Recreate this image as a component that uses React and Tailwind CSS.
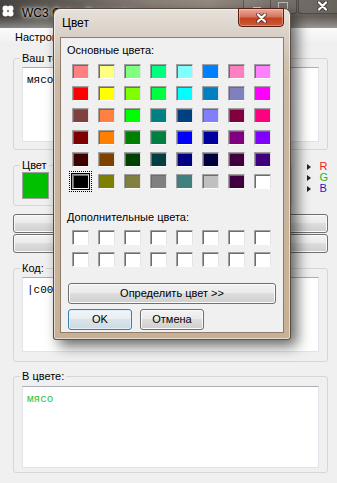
import React from 'react'

const basicColors = [
    ['#ff8080', '#ffff80', '#80ff80', '#00ff80', '#80ffff', '#0080ff', '#ff80c0', '#ff80ff'],
    ['#ff0000', '#ffff00', '#80ff00', '#00ff40', '#00ffff', '#0080c0', '#8080c0', '#ff00ff'],
    ['#804040', '#ff8040', '#00ff00', '#008080', '#004080', '#8080ff', '#800040', '#ff0080'],
    ['#800000', '#ff8000', '#008000', '#008040', '#0000ff', '#0000a0', '#800080', '#8000ff'],
    ['#400000', '#804000', '#004000', '#004040', '#000080', '#000040', '#400040', '#400080'],
    ['#000000', '#808000', '#808040', '#808080', '#408080', '#c0c0c0', '#400040', '#ffffff'],
]

const btn =
    'rounded-[3px] border border-[#707070] bg-[linear-gradient(180deg,#f2f2f2_0%,#ebebeb_45%,#dddddd_50%,#cfcfcf_100%)] shadow-[inset_0_0_0_1px_#fbfbfb]'

function Swatch({ color, selected }) {
    return (
        <div
            className={
                'h-[15px] w-[17px] border border-[#a0a0a0] border-b-white border-r-[#e3e3e3] shadow-[inset_1px_1px_0_#6d6d6d]' +
                (selected ? ' outline outline-dotted outline-black outline-offset-[2px] ring-1 ring-black' : '')
            }
            style={{ backgroundColor: color }}
        />
    )
}

function Group({ label, className, children }) {
    return (
        <fieldset className={'rounded-[3px] border border-[#d6d6d6] px-[8px] ' + className}>
            <legend className="-ml-[2px] px-[2px] leading-[14px]">{label}</legend>
            {children}
        </fieldset>
    )
}

function Field({ className, children }) {
    return (
        <div
            className={
                'border border-[#e2e3ea] border-t-[#abadb3] bg-white px-[4px] pt-[5px] font-["Liberation_Mono",monospace] text-[11px] leading-[14px] ' +
                className
            }
        >
            {children}
        </div>
    )
}

function CloseGlyph() {
    return (
        <svg width="11" height="10" viewBox="0 0 11 10">
            <path d="M2 1.5 L9 8.5 M9 1.5 L2 8.5" stroke="#3a3030" strokeOpacity="0.75" strokeWidth="4" strokeLinecap="round" />
            <path d="M2 1.5 L9 8.5 M9 1.5 L2 8.5" stroke="#fff" strokeWidth="2.2" strokeLinecap="round" />
        </svg>
    )
}

function ColorDialog() {
    return (
        <div className="absolute left-[53px] top-[8px] flex h-[332px] w-[238px] flex-col rounded-t-[7px] rounded-b-[3px] border border-[#3b3027]/80 bg-[linear-gradient(180deg,#e6e1db_0px,#d8cfc5_28px,#cbb9a4_70px,#c7b096_100%)] shadow-[inset_0_0_0_1px_rgba(255,255,255,0.55),6px_6px_14px_rgba(0,0,0,0.6)]">
            <div className="relative flex h-[28px] items-center pl-[8px] text-[12px]">
                Цвет
                <div className="absolute right-[6px] top-[-1px] flex h-[19px] w-[46px] items-center justify-center rounded-b-[4px] border border-[#5a1d12] bg-[linear-gradient(180deg,#ebab9c_0%,#d67360_45%,#c3431f_55%,#cb5a3a_100%)] shadow-[inset_0_0_0_1px_rgba(255,200,180,0.45)]">
                    <CloseGlyph />
                </div>
            </div>
            <div className="mx-[6px] flex h-[296px] flex-col border border-[#8e7b68] bg-[#f0f0f0] pl-[6px]">
                <p className="mt-[5px] leading-[14px]">Основные цвета:</p>
                <div className="ml-[5px] mt-[7px] grid grid-cols-[repeat(8,17px)] gap-x-[9px] gap-y-[7px]">
                    {basicColors.flat().map((c, i) => (
                        <Swatch key={i} color={c} selected={i === 40} />
                    ))}
                </div>
                <p className="mt-[21px] leading-[14px]">Дополнительные цвета:</p>
                <div className="ml-[5px] mt-[6px] grid grid-cols-[repeat(8,17px)] gap-x-[9px] gap-y-[7px]">
                    {Array.from({ length: 16 }).map((_, i) => (
                        <Swatch key={i} color="#ffffff" />
                    ))}
                </div>
                <div className={'ml-[1px] mt-[16px] flex h-[21px] w-[208px] items-center justify-center ' + btn}>
                    Определить цвет &gt;&gt;
                </div>
                <div className="ml-[1px] mt-[5px] flex gap-[8px]">
                    <div className="flex h-[21px] w-[64px] items-center justify-center rounded-[3px] border border-[#3c7fb1] bg-[linear-gradient(180deg,#f3f6f8_0%,#e8eef2_45%,#d9e3e9_50%,#cfdbe2_100%)] shadow-[inset_0_0_0_1px_#dff0fb]">
                        OK
                    </div>
                    <div className={'flex h-[21px] w-[64px] items-center justify-center ' + btn}>Отмена</div>
                </div>
            </div>
        </div>
    )
}

export default function App() {
    return (
        <div className="relative h-[483px] w-[337px] overflow-hidden bg-[#f0f0f0] font-['Liberation_Sans',Arial,sans-serif] text-[11px] text-black">
            {/* main window title bar */}
            <div className="relative h-[28px] bg-[linear-gradient(180deg,rgba(255,255,255,0)_60%,rgba(255,255,255,0.35)_100%),linear-gradient(90deg,#46423f_0%,#5b5651_15%,#8a8078_45%,#958b83_62%,#6f6862_85%,#615b56_100%)]">
                <svg className="absolute left-[2px] top-[5px]" width="12" height="12" viewBox="0 0 12 12">
                    <circle cx="3.5" cy="3.5" r="3" fill="#fff" />
                    <circle cx="8.5" cy="3.5" r="3" fill="#fff" />
                    <circle cx="3.5" cy="8.5" r="3" fill="#fff" />
                    <circle cx="8.5" cy="8.5" r="3" fill="#fff" />
                    <circle cx="6" cy="6" r="1.2" fill="#8a8078" />
                </svg>
                <span className="absolute left-[22px] top-[5px] text-[12px] leading-[16px] [text-shadow:0_0_6px_#fff,0_0_3px_#fff]">
                    WC3 Color Converter
                </span>
                <div className="absolute left-[243px] top-[-2px] flex h-[16px] w-[54px] rounded-b-[3px] border border-black/30 bg-white/5">
                    <div className="flex flex-1 items-center justify-center border-r border-black/30">
                        <div className="mt-[4px] h-[2px] w-[8px] bg-[#cfcfcf]" />
                    </div>
                    <div className="flex flex-1 items-center justify-center">
                        <div className="h-[8px] w-[10px] border border-[#bdbdbd]" />
                    </div>
                </div>
                <div className="absolute left-[298px] top-[-2px] flex h-[16px] w-[48px] items-center justify-center rounded-b-[3px] border border-black/30 bg-white/5">
                    <CloseGlyph />
                </div>
            </div>

            {/* menu */}
            <div className="h-[18px] bg-[linear-gradient(180deg,#fbfbfb,#eeeeee)] pl-[15px] leading-[18px]">Настройки</div>

            <div className="pl-[13px] pr-[9px]">
                <Group label="Ваш текст:" className="mt-[5px] pb-[7px]">
                    <Field className="mt-[2px] h-[75px]">мясо</Field>
                </Group>

                <div className="mt-[8px] flex items-start">
                    <Group label="Цвет" className="w-[283px] pb-[6px]">
                        <div className="h-[27px] w-[27px] border border-[#a0a0a0] bg-[#00c000]" />
                    </Group>
                    <div className="ml-[15px] mt-[3px] flex flex-col text-[11px] leading-[11px]">
                        {[
                            ['R', 'text-[#e8212b]'],
                            ['G', 'text-[#1fb51f]'],
                            ['B', 'text-[#1a1ad0]'],
                        ].map(([l, c]) => (
                            <div key={l} className="flex items-center gap-[8px]">
                                <span className="h-0 w-0 border-y-[3px] border-l-[4px] border-y-transparent border-l-[#222]" />
                                <span className={c}>{l}</span>
                            </div>
                        ))}
                    </div>
                </div>

                <div className={'mt-[8px] h-[19px] ' + btn} />
                <div className={'mt-[1px] h-[19px] ' + btn} />

                <Group label="Код:" className="mt-[8px] pb-[9px]">
                    <Field className="mt-[2px] h-[75px]">|c0000c000мясо|r</Field>
                </Group>

                <Group label="В цвете:" className="mt-[7px] pb-[4px]">
                    <Field className="mt-[3px] h-[82px] text-[#2ec42e]">мясо</Field>
                </Group>
            </div>

            <ColorDialog />
        </div>
    )
}
